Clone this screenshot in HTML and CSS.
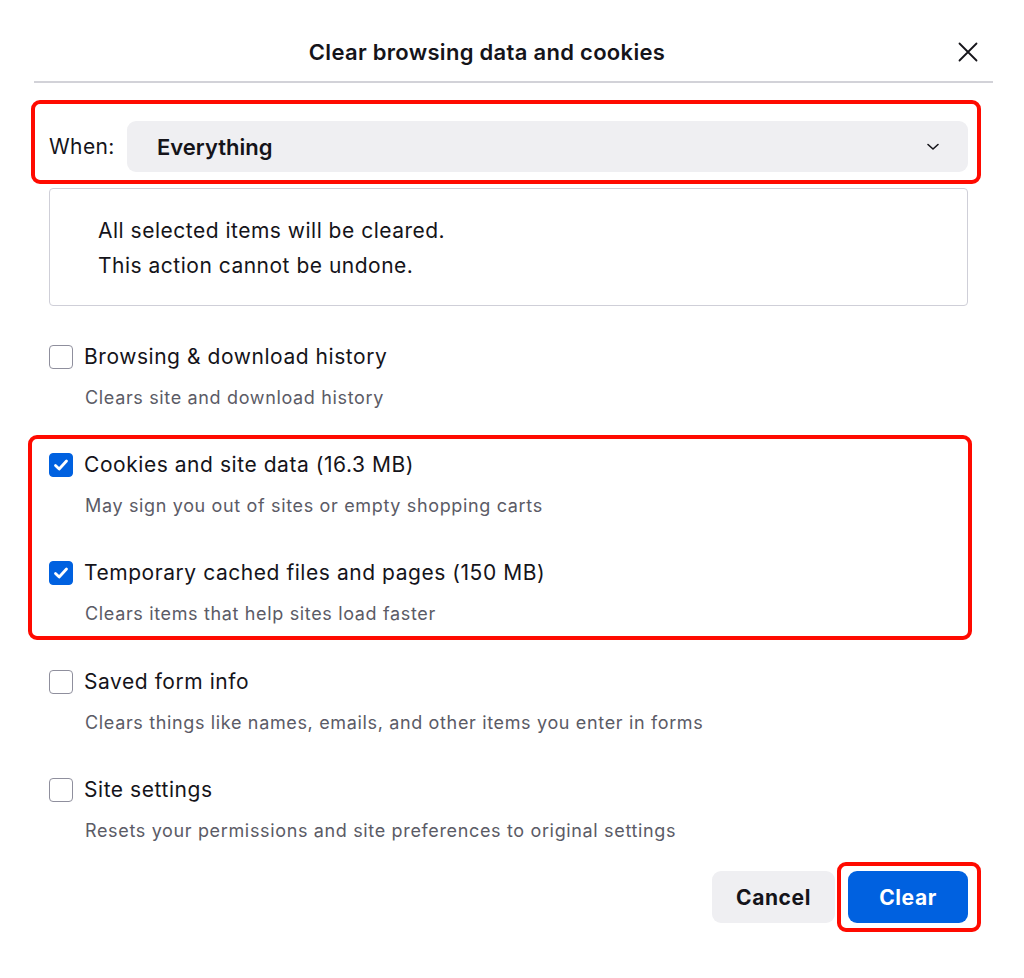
FILE: index.html
```html
<!DOCTYPE html>
<html lang="en">
<head>
<meta charset="utf-8">
<title>Clear browsing data and cookies</title>
<link rel="stylesheet" href="styles.css">
</head>
<body>
<div class="dialog">
  <header class="header">
    <h1 class="title">Clear browsing data and cookies</h1>
    <button class="close" aria-label="Close">
      <svg width="20" height="20" viewBox="0 0 20 20"><path d="M1.5 1.5 L18.5 18.5 M18.5 1.5 L1.5 18.5" stroke="#15141a" stroke-width="1.8" fill="none" stroke-linecap="round"/></svg>
    </button>
  </header>
  <main class="content">
    <div class="hl hl-when">
      <div class="when-row">
        <span class="when-label">When:</span>
        <div class="select">
          <span class="select-value">Everything</span>
          <svg class="chevron" width="14" height="8" viewBox="0 0 14 8"><path d="M2 1.5 L7 6 L12 1.5" stroke="#15141a" stroke-width="1.6" fill="none" stroke-linecap="round" stroke-linejoin="round"/></svg>
        </div>
      </div>
    </div>
    <div class="info">
      <p>All selected items will be cleared.</p>
      <p>This action cannot be undone.</p>
    </div>

    <div class="item item-first">
      <div class="row"><span class="cb"></span><span class="label">Browsing &amp; download history</span></div>
      <div class="desc">Clears site and download history</div>
    </div>

    <div class="hl hl-items">
      <div class="item item-in">
        <div class="row"><span class="cb checked"><svg width="24" height="24" viewBox="0 0 24 24"><path d="M6.5 12.5 L10.2 16 L17.5 8" stroke="#fff" stroke-width="2.8" fill="none" stroke-linecap="round" stroke-linejoin="round"/></svg></span><span class="label">Cookies and site data (16.3 MB)</span></div>
        <div class="desc">May sign you out of sites or empty shopping carts</div>
      </div>
      <div class="item">
        <div class="row"><span class="cb checked"><svg width="24" height="24" viewBox="0 0 24 24"><path d="M6.5 12.5 L10.2 16 L17.5 8" stroke="#fff" stroke-width="2.8" fill="none" stroke-linecap="round" stroke-linejoin="round"/></svg></span><span class="label">Temporary cached files and pages (150 MB)</span></div>
        <div class="desc">Clears items that help sites load faster</div>
      </div>
    </div>

    <div class="item item-after">
      <div class="row"><span class="cb"></span><span class="label">Saved form info</span></div>
      <div class="desc">Clears things like names, emails, and other items you enter in forms</div>
    </div>
    <div class="item">
      <div class="row"><span class="cb"></span><span class="label">Site settings</span></div>
      <div class="desc">Resets your permissions and site preferences to original settings</div>
    </div>
  </main>
  <footer class="actions">
    <button class="btn btn-cancel">Cancel</button>
    <div class="hl hl-btn">
      <button class="btn btn-clear">Clear</button>
    </div>
  </footer>
</div>
</body>
</html>
```

FILE: styles.css
```css
* { box-sizing: border-box; }
html, body { margin: 0; padding: 0; background: #fff; }
body {
  font-family: Inter, "Noto Sans", "Liberation Sans", sans-serif;
  color: #15141a;
  width: 1024px;
  height: 978px;
  overflow: hidden;
}
.header {
  display: flex;
  align-items: center;
  margin: 0 31px 0 34px;
  padding: 39px 0 16px;
  border-bottom: 2px solid #d2d2d8;
}
.title {
  flex: 1;
  margin: 0;
  text-align: center;
  font-size: 22px;
  font-weight: 600;
  line-height: 26px;
  letter-spacing: 0.3px;
}
.close {
  width: 53px;
  height: 26px;
  padding: 0 0 0 18px;
  border: 0;
  background: none;
  display: flex;
  align-items: center;
  justify-content: flex-start;
}
.content {
  padding: 0 56px 0 49px;
}
.hl {
  border: 4px solid #ff0a00;
  border-radius: 9px;
}
.hl-when {
  margin: 17px -13px 0 -18px;
  padding: 17px 9px 8px 14px;
}
.when-row {
  display: flex;
  align-items: center;
}
.when-label {
  font-size: 21px;
  letter-spacing: 0.4px;
  width: 78px;
}
.select {
  flex: 1;
  height: 51px;
  background: #efeff2;
  border-radius: 9px;
  display: flex;
  align-items: center;
  padding: 0 28px 0 30px;
}
.select-value {
  flex: 1;
  font-size: 22px;
  font-weight: 600;
}
.info {
  margin-top: 4px;
  border: 1px solid #cfcfd8;
  border-radius: 4px;
  padding: 24px 20px 22px 48px;
}
.info p {
  margin: 0;
  font-size: 21px;
  letter-spacing: 0.5px;
  line-height: 35px;
}
.item { margin-top: 43px; }
.item-first { margin-top: 39px; }
.item-in { margin-top: 0; }
.item-after { margin-top: 30px; }
.hl-items {
  margin: 25px -4px 0 -21px;
  padding: 14px 0 10px 17px;
}
.row {
  display: flex;
  align-items: center;
  height: 24px;
}
.cb {
  width: 24px;
  height: 24px;
  border: 1.5px solid #8f8f9d;
  border-radius: 4px;
  flex: none;
  display: flex;
  align-items: center;
  justify-content: center;
}
.cb.checked {
  background: #0061e0;
  border-color: #0061e0;
}
.cb svg { display: block; flex: none; }
.label {
  margin-left: 11px;
  font-size: 21px;
  letter-spacing: 0.55px;
  line-height: 24px;
}
.desc {
  margin-top: 17px;
  padding-left: 36px;
  font-size: 18px;
  letter-spacing: 0.65px;
  line-height: 24px;
  color: #5b5b66;
}
.actions {
  display: flex;
  justify-content: flex-end;
  align-items: center;
  gap: 2px;
  margin: 19px 43px 0 0;
}
.btn {
  font-family: inherit;
  font-size: 21px;
  letter-spacing: 0.6px;
  font-weight: 700;
  border: 0;
  border-radius: 9px;
  height: 52px;
  padding: 0;
}
.btn-cancel {
  width: 123px;
  background: #efeff2;
  color: #15141a;
}
.hl-btn {
  padding: 5px 9px 5px 7px;
}
.btn-clear {
  display: block;
  width: 120px;
  background: #0061e0;
  color: #fff;
}
```
